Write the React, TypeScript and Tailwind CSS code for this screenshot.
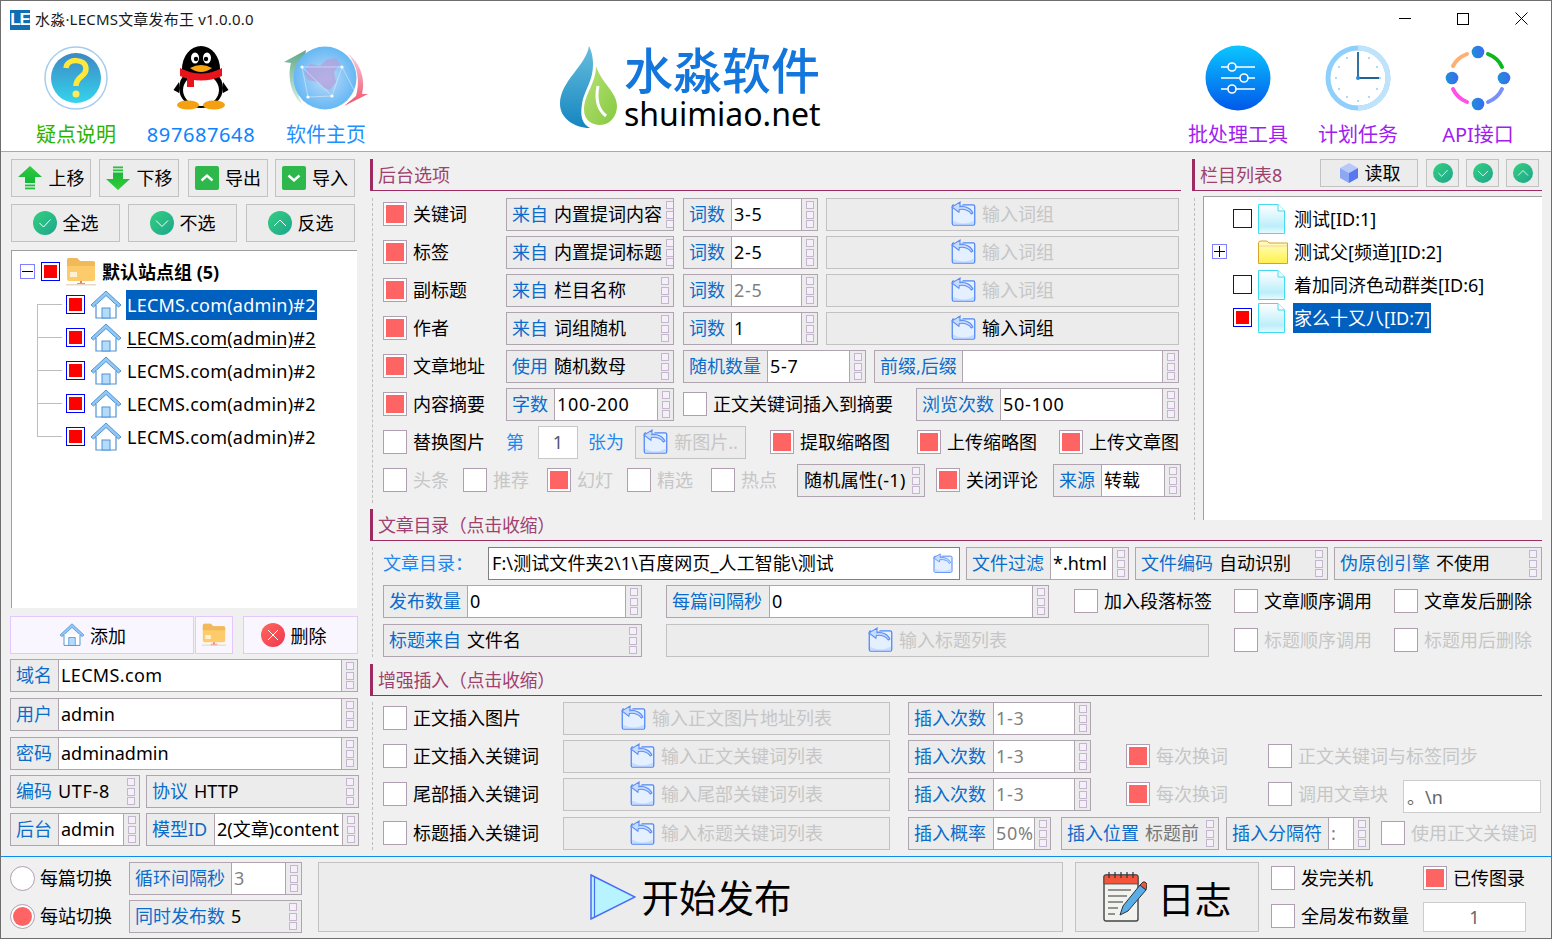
import React from 'react';

const Spin = ({ line = false }: { line?: boolean }) => (
  <div className={`w-[16px] shrink-0 self-stretch flex flex-col items-center justify-center gap-[1.5px] ml-auto ${line ? 'border-l border-[#b0a4b0]' : ''}`}>
    {[0, 1, 2].map((i) => (
      <div key={i} className="w-[8px] h-[8px] border border-[#c4b6cc] bg-[#f4eff8]" />
    ))}
  </div>
);

const wide = (v?: string) => (v && /^[\d\-%UTF]+$/.test(v) ? 'tracking-[0.7px]' : /^LECMS|\(-1\)/.test(v ?? '') ? 'tracking-[0.35px]' : '');

const Field = ({
  cls,
  label,
  value,
  labelW,
  gray,
}: {
  cls: string;
  label: string;
  value?: string;
  labelW?: string;
  gray?: boolean;
}) => (
  <div className={`h-[33px] shrink-0 flex items-center border border-[#b0a4b0] bg-[#ececec] whitespace-nowrap overflow-hidden ${cls}`}>
    {labelW ? (
      <>
        <div className={`h-full shrink-0 flex items-center pl-[5px] pb-[2px] border-r border-[#b0a4b0] text-[#0b6ccb] ${labelW}`}>{label}</div>
        <div className={`h-full flex-1 min-w-0 overflow-hidden flex items-center pl-[2px] pb-[2px] bg-white ${gray ? 'text-[#808080]' : 'text-black'} ${wide(value)}`}>{value}</div>
        <Spin line />
      </>
    ) : (
      <>
        {label && <span className="pl-[5px] pb-[2px] text-[#0b6ccb]">{label}</span>}
        <span className={`ml-[6px] pb-[2px] ${label ? '' : '-ml-[0px]'} ${gray ? 'text-[#777777]' : 'text-black'} ${wide(value)}`}>{value}</span>
        <Spin />
      </>
    )}
  </div>
);

const Check = ({ on, label, off, cls }: { on?: boolean; label: string; off?: boolean; cls: string }) => (
  <div className={`h-[33px] shrink-0 flex items-center pb-[2px] whitespace-nowrap ${cls}`}>
    <div className="w-[24px] h-[24px] shrink-0 border border-[#b09fb0] bg-white flex items-center justify-center">
      {on && <div className="w-[18px] h-[18px] bg-[#ff6464]" />}
    </div>
    <span className={`ml-[6px] ${off ? 'text-[#c6c6c6]' : 'text-black'}`}>{label}</span>
  </div>
);

const Btn = ({ cls, children }: { cls: string; children: React.ReactNode }) => (
  <div className={`shrink-0 flex items-center justify-center border border-[#c2c2c2] bg-[#ececec] whitespace-nowrap ${cls}`}>{children}</div>
);

const SecHead = ({ title, cls, children }: { title: string; cls: string; children?: React.ReactNode }) => (
  <div className={`shrink-0 flex items-start border-l-[3px] border-b border-[#9e2a62] pl-[5px] ${cls}`}>
    <span className="text-[#a0406f] self-center whitespace-nowrap">{title}</span>
    {children}
  </div>
);

const BackIcon = ({ s = 25 }: { s?: number }) => (
  <svg width={s} height={s} viewBox="0 0 24 24" className="shrink-0">
    <rect x="1.2" y="3.8" width="21.6" height="19.4" rx="1.5" fill="#e4efff" stroke="#4f86f5" strokeWidth="1.2" />
    <path d="M2 19 Q12 24 22 19 V22.5 H2Z" fill="#c6dcff" />
    <path d="M3 4 H11 V2 H3Z" fill="#f0f0f0" />
    <path d="M21 11.5 C19.5 7 13 4.5 8.5 5.5 L8.8 1 L0.8 5.8 L7.6 10.8 L8 8.2 C12 7.4 17.5 8.5 19.5 12.5 Z" fill="#c8dcff" stroke="#5b8ef5" strokeWidth="1" />
  </svg>
);

const Folder = ({ s = 30 }: { s?: number }) => (
  <svg width={s} height={s} viewBox="0 0 30 30" className="shrink-0">
    <path d="M1 3 Q1 1 3 1 H11 L14 4 H27 Q29 4 29 6 V22 Q29 24 27 24 H3 Q1 24 1 22Z" fill="#fdcb6a" />
    <path d="M1 3 Q1 1 3 1 H11 L14 4 H27 Q29 4 29 6 V9 H1Z" fill="#f0b95a" />
    <rect x="4" y="15" width="7" height="5" fill="#fff2d2" />
    <rect x="14" y="24" width="2" height="3" fill="#ec7a66" />
    <rect x="11" y="26" width="8" height="2" fill="#f0907a" />
    <rect x="0" y="27" width="30" height="1.5" fill="#e6d9c8" />
  </svg>
);

const Home = ({ s = 30 }: { s?: number }) => (
  <svg width={s} height={s} viewBox="0 0 30 30" className="shrink-0">
    <path d="M15 1 L30 15 L27.5 17 L15 5.5 L2.5 17 L0 15Z" fill="#93c8f2" stroke="#4f93d8" strokeWidth="1" />
    <path d="M5 14 V28 H25 V14" fill="#fff" stroke="#4f93d8" strokeWidth="1.2" />
    <rect x="11" y="18" width="8" height="10" fill="#b4dcf8" stroke="#4f93d8" strokeWidth="1" />
  </svg>
);

const RoundBadge = ({ kind, s = 24, id }: { kind: 'c' | 'd' | 'u'; s?: number; id: string }) => (
  <svg width={s} height={s} viewBox="0 0 24 24" className="shrink-0">
    <defs>
      <linearGradient id={id} x1="0" y1="0" x2="1" y2="1">
        <stop offset="0" stopColor="#34d07e" />
        <stop offset="1" stopColor="#1ea58e" />
      </linearGradient>
    </defs>
    <circle cx="12" cy="12" r="12" fill={`url(#${id})`} />
    <path d={kind === 'c' ? 'M6.5 12 L10.5 16 L17.5 8.5' : kind === 'd' ? 'M6 9.5 L12 15.5 L18 9.5' : 'M6 15 L12 9 L18 15'} fill="none" stroke="#fff" strokeWidth="1" />
  </svg>
);

const GreenSquare = ({ up }: { up?: boolean }) => (
  <svg width="24" height="24" viewBox="0 0 24 24" className="shrink-0">
    <rect width="24" height="24" rx="2" fill="#2eb84c" />
    <path d={up ? 'M6.5 14.5 L12 9.5 L17.5 14.5' : 'M6.5 9.5 L12 14.5 L17.5 9.5'} fill="none" stroke="#fff" strokeWidth="2.4" />
  </svg>
);

const BigArrow = ({ up, id }: { up?: boolean; id: string }) => (
  <svg width="24" height="24" viewBox="0 0 24 24" className="shrink-0">
    <defs>
      <linearGradient id={id} x1="0" y1="0" x2="0" y2="1">
        <stop offset="0" stopColor={up ? '#2ecb3c' : '#1cb53a'} />
        <stop offset="1" stopColor={up ? '#14b83a' : '#30d038'} />
      </linearGradient>
    </defs>
    {up ? (
      <g fill={`url(#${id})`}>
        <path d="M12 0 L24 11 H17 V17 H7 V11 H0Z" />
        <rect x="7" y="18.5" width="10" height="1.8" />
        <rect x="7" y="21.5" width="10" height="1.8" />
      </g>
    ) : (
      <g fill={`url(#${id})`}>
        <rect x="7" y="0.5" width="10" height="1.8" />
        <rect x="7" y="3.5" width="10" height="1.8" />
        <path d="M7 6.5 H17 V13 H24 L12 24 L0 13 H7Z" />
      </g>
    )}
  </svg>
);

const BlueBox = ({ on }: { on?: boolean }) => (
  <div className="w-[19px] h-[19px] shrink-0 border border-[#0000ff] bg-white flex items-center justify-center">
    {on && <div className="w-[13px] h-[13px] bg-[#ff0000]" />}
  </div>
);

const ExpandBox = ({ plus }: { plus?: boolean }) => (
  <div className="w-[15px] h-[15px] shrink-0 border border-[#8080ff] bg-white flex items-center justify-center relative">
    <div className="w-[11px] h-px bg-black" />
    {plus && <div className="absolute w-px h-[11px] bg-black" />}
  </div>
);

const FileIcon = ({ id }: { id: string }) => (
  <svg width="27" height="30" viewBox="0 0 27 30" className="shrink-0">
    <defs>
      <linearGradient id={id} x1="0" y1="0" x2="0" y2="1">
        <stop offset="0" stopColor="#ffffff" />
        <stop offset="0.75" stopColor="#bdeefa" />
        <stop offset="1" stopColor="#e8fbff" />
      </linearGradient>
    </defs>
    <path d="M0.5 0.5 H20 L26.5 7 V29.5 H0.5Z" fill={`url(#${id})`} stroke="#3fdcf2" />
    <path d="M20 0.5 V7 H26.5" fill="#fff" stroke="#3fdcf2" />
  </svg>
);

const YellowFolder = () => (
  <svg width="30" height="24" viewBox="0 0 30 24" className="shrink-0">
    <defs>
      <linearGradient id="yf" x1="0" y1="0" x2="0" y2="1">
        <stop offset="0" stopColor="#fffbd0" />
        <stop offset="0.6" stopColor="#fff77a" />
        <stop offset="1" stopColor="#ffef50" />
      </linearGradient>
    </defs>
    <path d="M0.5 23.5 V3 Q0.5 1 3 1 H8 Q10 1 11 3 H29.5 V23.5Z" fill="url(#yf)" stroke="#dba12c" />
    <path d="M1 6 H29" stroke="#f0d890" />
  </svg>
);

const TreeRow = ({ first, last, sel, under }: { first?: boolean; last?: boolean; sel?: boolean; under?: boolean }) => (
  <div className="h-[33px] flex items-center ml-[25px]">
    <div className="w-[25px] h-[33px] shrink-0 flex flex-col">
      <div className={`h-[16px] ${first ? '' : 'border-l border-[#bdbdbd]'}`} />
      <div className={`h-[17px] border-t border-[#bdbdbd] ${last ? '' : 'border-l'}`} />
    </div>
    <div className="ml-[4px] mr-[6px]"><BlueBox on /></div>
    <Home />
    <span className={`ml-[5px] h-[30px] px-px flex items-center whitespace-nowrap tracking-[0.22px] ${sel ? 'bg-[#0060c0] text-white' : 'text-black'} ${under ? 'underline underline-offset-2' : ''}`}>LECMS.com(admin)#2</span>
  </div>
);

const CatRow = ({ checked, folder, label, sel, id }: { checked?: boolean; folder?: boolean; label: string; sel?: boolean; id: string }) => (
  <div className="h-[33px] flex items-center pl-[8px]">
    <div className="w-[21px] shrink-0">{folder && <ExpandBox plus />}</div>
    <div className="w-[19px] shrink-0">{!folder && <BlueBox on={checked} />}</div>
    <div className="w-[34px] shrink-0 pl-[6px]">{folder ? <YellowFolder /> : <FileIcon id={id} />}</div>
    <span className={`ml-[7px] h-[30px] px-px flex items-center whitespace-nowrap ${sel ? 'bg-[#0060c0] text-white' : 'text-black'}`}>{label}</span>
  </div>
);

const Tile = ({ label, color, children, cls = '' }: { label: string; color: string; children: React.ReactNode; cls?: string }) => (
  <div className={`shrink-0 flex flex-col items-center w-[120px] ${cls}`}>
    <div className="h-[64px] flex items-center justify-center">{children}</div>
    <div className={`mt-[15px] text-[20px] leading-[20px] whitespace-nowrap ${color}`}>{label}</div>
  </div>
);

const BackBtn = ({ cls, text, off }: { cls: string; text: string; off?: boolean }) => (
  <Btn cls={`h-[33px] pb-[2px] ${cls}`}>
    <BackIcon />
    <span className={`ml-[6px] ${off ? 'text-[#c6c6c6]' : 'text-black'}`}>{text}</span>
  </Btn>
);

export default function App() {
  return (
    <div className="w-[1552px] h-[939px] overflow-hidden border border-[#6e6e6e] bg-[#f0f0f0] flex flex-col text-[18px] leading-none text-black font-['Noto_Sans','Noto_Sans_CJK_SC',sans-serif]">
      {/* header */}
      <div className="h-[151px] shrink-0 bg-white border-b border-[#a8a8a8] flex flex-col">
        <div className="h-[37px] shrink-0 flex items-center pl-[9px]">
          <div className="w-[20px] h-[20px] bg-[#106fb4] text-white text-[17px] font-bold flex items-center justify-center tracking-[-1px] font-['Liberation_Sans',sans-serif]">LE</div>
          <span className="ml-[5px] text-[15px] tracking-[0.2px] whitespace-nowrap text-[#1a1a1a]">水淼·LECMS文章发布王 v1.0.0.0</span>
          <div className="ml-auto mr-px flex items-center pb-[2px]">
            <div className="w-[58px] flex justify-center"><div className="w-[12px] h-px bg-black" /></div>
            <div className="w-[58px] flex justify-center"><div className="w-[12px] h-[12px] border border-black" /></div>
            <div className="w-[58px] flex justify-center">
              <svg width="13" height="13" viewBox="0 0 13 13"><path d="M0.5 0.5 L12.5 12.5 M12.5 0.5 L0.5 12.5" stroke="#000" strokeWidth="1" /></svg>
            </div>
          </div>
        </div>
        <div className="flex pl-[15px] pt-[8px]">
          <Tile label="疑点说明" color="text-[#2bb400]" cls="mr-[5px]">
            <svg width="64" height="64" viewBox="0 0 64 64">
              <defs>
                <linearGradient id="hq" x1="0" y1="0" x2="0" y2="1">
                  <stop offset="0" stopColor="#3c88c4" />
                  <stop offset="1" stopColor="#35d4ec" />
                </linearGradient>
              </defs>
              <circle cx="32" cy="32" r="31" fill="#fff" stroke="#a6cdf0" strokeWidth="1.5" />
              <circle cx="32" cy="32" r="25" fill="url(#hq)" />
              <path d="M22 22 C23 12 42 12 42 23 C42 31 32 30 32 40" fill="none" stroke="#ffe83c" strokeWidth="5.5" />
              <circle cx="32" cy="48" r="3.5" fill="#ffeb60" />
            </svg>
          </Tile>
          <Tile label="897687648" color="text-[#0a84ff] tracking-[0.6px]" cls="mr-[5px]">
            <svg width="56" height="64" viewBox="0 0 56 64">
              <ellipse cx="28" cy="23" rx="19" ry="23" fill="#000" />
              <ellipse cx="28" cy="42" rx="22" ry="20" fill="#000" />
              <path d="M6 36 L0.5 44 L6 47Z M50 36 L55.5 44 L50 47Z" fill="#000" />
              <ellipse cx="28" cy="44" rx="18" ry="16" fill="#fff" />
              <ellipse cx="22" cy="12" rx="4" ry="5.5" fill="#fff" />
              <ellipse cx="34" cy="12" rx="4" ry="5.5" fill="#fff" />
              <circle cx="23" cy="13" r="2.2" fill="#000" />
              <circle cx="33" cy="13" r="2.2" fill="#000" />
              <path d="M17 22 Q28 16 39 22 Q28 30 17 22Z" fill="#f8a510" />
              <path d="M7 22 Q28 33 49 22 L49 30 Q28 39 7 30Z" fill="#e8141c" />
              <rect x="14" y="30" width="7" height="11" fill="#e8141c" />
              <ellipse cx="15" cy="59" rx="11" ry="4.5" fill="#f5a010" />
              <ellipse cx="41" cy="59" rx="11" ry="4.5" fill="#f5a010" />
            </svg>
          </Tile>
          <Tile label="软件主页" color="text-[#1e90ff]" cls="mr-[174px]">
            <svg width="84" height="64" viewBox="0 0 84 64">
              <defs>
                <radialGradient id="gl" cx="0.5" cy="0.5" r="0.55">
                  <stop offset="0" stopColor="#c0dcf8" />
                  <stop offset="1" stopColor="#5cb4f4" />
                </radialGradient>
                <linearGradient id="gg" x1="0" y1="0" x2="0" y2="1">
                  <stop offset="0" stopColor="#5fa888" />
                  <stop offset="1" stopColor="#d8f0e8" />
                </linearGradient>
                <linearGradient id="gr" x1="0" y1="0" x2="0" y2="1">
                  <stop offset="0" stopColor="#f8d0e0" />
                  <stop offset="1" stopColor="#f05068" />
                </linearGradient>
              </defs>
              <path d="M22 4 L0 16 L7 17 C3 32 8 50 18 58 C11 44 10 28 15 18 L20 18Z" fill="url(#gg)" />
              <path d="M64 8 C74 20 76 36 72 50 L60 60 L84 48 L78 48 C82 34 76 16 64 8Z" fill="url(#gr)" />
              <circle cx="41" cy="32" r="31.5" fill="url(#gl)" />
              <path d="M20 26 L26 18 L36 20 L42 14 L52 12 L56 18 L50 26 L52 36 L46 44 L40 42 L34 36 L24 34Z" fill="#b4a0dc" opacity="0.75" />
              <path d="M18 21 L58 21 M18 21 L24 51 M18 21 L48 50 M58 21 L48 50 M24 51 L48 50 M58 21 L70 44" stroke="#d8ecfc" strokeWidth="0.6" fill="none" />
              <g fill="#fff"><circle cx="18" cy="21" r="1.6" /><circle cx="58" cy="21" r="1.6" /><circle cx="24" cy="51" r="1.6" /><circle cx="48" cy="50" r="1.6" /></g>
            </svg>
          </Tile>
          <div className="w-[261px] shrink-0 flex items-start h-[84px]">
            <svg width="58" height="83" viewBox="0 0 58 83" className="shrink-0">
              <defs>
                <linearGradient id="d1" x1="0" y1="0" x2="0" y2="1">
                  <stop offset="0" stopColor="#67bedd" />
                  <stop offset="1" stopColor="#1585c0" />
                </linearGradient>
                <linearGradient id="d2" x1="0" y1="0" x2="1" y2="1">
                  <stop offset="0" stopColor="#b8e276" />
                  <stop offset="1" stopColor="#85c940" />
                </linearGradient>
              </defs>
              <path d="M29 0 C26 20 0 35 0 58 C0 72 14 82 30 82 C22 78 20 70 22 58 C24 44 33 36 33 18 C33 10 31 4 29 0Z" fill="url(#d1)" />
              <path d="M36 20 C36 38 24 48 24 64 C24 74 32 79 40 79 C50 79 57 70 57 60 C57 46 42 38 36 20Z" fill="url(#d2)" />
              <path d="M38 40 C36 50 36 62 46 70" fill="none" stroke="#fff" strokeWidth="3" />
            </svg>
            <div className="ml-[6px] flex flex-col">
              <span className="text-[49px] leading-[49px] text-[#1376dc] whitespace-nowrap font-medium">水淼软件</span>
              <span className="mt-[4px] text-[32px] leading-[30px] text-black whitespace-nowrap">shuimiao.net</span>
            </div>
          </div>
          <div className="ml-auto mr-[13px] flex">
            <Tile label="批处理工具" color="text-[#a01ef0]">
              <svg width="66" height="66" viewBox="0 0 66 66">
                <defs>
                  <linearGradient id="sl" x1="0" y1="0" x2="0" y2="1">
                    <stop offset="0" stopColor="#0cc6ff" />
                    <stop offset="1" stopColor="#0058ea" />
                  </linearGradient>
                </defs>
                <circle cx="33" cy="33" r="32.5" fill="url(#sl)" />
                <g stroke="#fff" strokeWidth="1.6" fill="none">
                  <path d="M16 22 H50 M16 33 H50 M16 44 H50" />
                  <circle cx="27" cy="22" r="4" fill="#0a9cf4" />
                  <circle cx="39" cy="33" r="4" fill="#0a88f0" />
                  <circle cx="27" cy="44" r="4" fill="#0a70ec" />
                </g>
              </svg>
            </Tile>
            <Tile label="计划任务" color="text-[#a01ef0]">
              <svg width="66" height="66" viewBox="0 0 66 66">
                <circle cx="33" cy="33" r="30" fill="#fff" stroke="#8ed0fb" strokeWidth="5" />
                <path d="M33 3 A30 30 0 0 1 33 63" fill="none" stroke="#bfe3fb" strokeWidth="5" />
                <g fill="#8cc8ee">
                  <circle cx="33" cy="11" r="0.9" /><circle cx="33" cy="56" r="0.9" /><circle cx="11" cy="33" r="0.9" /><circle cx="55" cy="33" r="0.9" />
                  <circle cx="44" cy="13" r="0.9" /><circle cx="22" cy="13" r="0.9" /><circle cx="52" cy="22" r="0.9" /><circle cx="14" cy="22" r="0.9" />
                  <circle cx="52" cy="44" r="0.9" /><circle cx="14" cy="44" r="0.9" /><circle cx="44" cy="52" r="0.9" /><circle cx="22" cy="52" r="0.9" />
                </g>
                <path d="M33 7 V33 H54" fill="none" stroke="#1e6296" strokeWidth="1.8" />
                <circle cx="33" cy="33" r="2" fill="#2a8ad8" />
              </svg>
            </Tile>
            <Tile label="API接口" color="text-[#a01ef0]">
              <svg width="66" height="66" viewBox="0 0 66 66">
                <defs>
                  <linearGradient id="an" x1="0" y1="0" x2="1" y2="0">
                    <stop offset="0" stopColor="#1e90d8" />
                    <stop offset="1" stopColor="#3a6cf0" />
                  </linearGradient>
                </defs>
                <g fill="none" strokeWidth="4" strokeLinecap="round">
                  <path d="M8 21 Q12 13 22 9" stroke="#ffb070" />
                  <path d="M43 9 Q53 13 57 22" stroke="#0cb81c" />
                  <path d="M57 44 Q53 53 43 57" stroke="#7a90f8" />
                  <path d="M22 57 Q12 53 8 44" stroke="#ff50e8" />
                </g>
                <g fill="url(#an)">
                  <circle cx="33" cy="7" r="6.3" /><circle cx="33" cy="59" r="6.3" /><circle cx="7" cy="33" r="6.3" /><circle cx="59" cy="33" r="6.3" />
                </g>
              </svg>
            </Tile>
          </div>
        </div>
      </div>

      {/* body */}
      <div className="h-[704px] shrink-0 flex">
        {/* left column */}
        <div className="w-[369px] shrink-0 pl-[9px] pt-[7px] flex flex-col">
          <div className="flex h-[38px] shrink-0 pl-px">
            <Btn cls="w-[80px] h-[38px]"><BigArrow up id="au" /><span className="ml-[7px]">上移</span></Btn>
            <Btn cls="w-[80px] h-[38px] ml-[8px]"><BigArrow id="ad" /><span className="ml-[7px]">下移</span></Btn>
            <Btn cls="w-[80px] h-[38px] ml-[9px]"><GreenSquare up /><span className="ml-[6px]">导出</span></Btn>
            <Btn cls="w-[80px] h-[38px] ml-[7px]"><GreenSquare /><span className="ml-[6px]">导入</span></Btn>
          </div>
          <div className="flex h-[38px] shrink-0 mt-[7px] pl-px">
            <Btn cls="w-[109px] h-[38px]"><RoundBadge kind="c" id="b1" /><span className="ml-[6px]">全选</span></Btn>
            <Btn cls="w-[109px] h-[38px] ml-[8px]"><RoundBadge kind="d" id="b2" /><span className="ml-[6px]">不选</span></Btn>
            <Btn cls="w-[109px] h-[38px] ml-[9px]"><RoundBadge kind="u" id="b3" /><span className="ml-[6px]">反选</span></Btn>
          </div>
          <div className="ml-px mt-[8px] w-[346px] h-[358px] shrink-0 bg-white border-t border-l border-[#a0a0a0] pt-[4px]">
            <div className="h-[33px] flex items-center pl-[8px]">
              <ExpandBox />
              <div className="ml-[6px] mr-[6px]"><BlueBox on /></div>
              <Folder />
              <span className="ml-[6px] font-bold whitespace-nowrap">默认站点组 (5)</span>
            </div>
            <TreeRow first sel />
            <TreeRow under />
            <TreeRow />
            <TreeRow />
            <TreeRow last />
          </div>
          <div className="flex h-[38px] shrink-0 mt-[8px]">
            <div className="w-[184px] h-[38px] border-[1.5px] border-[#e2c8ff] bg-[#faf6ff] flex items-center justify-center pr-[18px]">
              <Home s={24} /><span className="ml-[6px] mt-[1px]">添加</span>
            </div>
            <div className="w-[38px] h-[38px] ml-px border-[1.5px] border-[#e2c8ff] bg-[#faf6ff] flex items-center justify-center"><Folder s={24} /></div>
            <div className="w-[115px] h-[38px] ml-[10px] border-[1.5px] border-[#e2c8ff] bg-[#faf6ff] flex items-center justify-center pr-[14px]">
              <svg width="24" height="24" viewBox="0 0 24 24" className="shrink-0">
                <defs>
                  <linearGradient id="xr" x1="0" y1="0" x2="1" y2="1">
                    <stop offset="0" stopColor="#ff6a5e" />
                    <stop offset="1" stopColor="#f0354e" />
                  </linearGradient>
                </defs>
                <circle cx="12" cy="12" r="12" fill="url(#xr)" />
                <path d="M7 7 L17 17 M17 7 L7 17" stroke="#fff" strokeWidth="1" />
              </svg>
              <span className="ml-[6px] mt-[1px]">删除</span>
            </div>
          </div>
          <Field cls="w-[348px] mt-[5px]" label="域名" value="LECMS.com" labelW="w-[48px]" />
          <Field cls="w-[348px] mt-[6px]" label="用户" value="admin" labelW="w-[48px]" />
          <Field cls="w-[348px] mt-[6px]" label="密码" value="adminadmin" labelW="w-[48px]" />
          <div className="flex mt-[5px]">
            <Field cls="w-[130px]" label="编码" value="UTF-8" />
            <Field cls="w-[213px] ml-[6px]" label="协议" value="HTTP" />
          </div>
          <div className="flex mt-[5px]">
            <Field cls="w-[130px]" label="后台" value="admin" labelW="w-[48px]" />
            <Field cls="w-[213px] ml-[6px]" label="模型ID" value="2(文章)content" labelW="w-[68px]" />
          </div>
        </div>

        {/* right region */}
        <div className="flex-1 min-w-0 pt-[7px] flex flex-col">
          <div className="flex h-[350px] shrink-0">
            {/* 后台选项 */}
            <div className="w-[811px] shrink-0 flex flex-col">
              <SecHead title="后台选项" cls="h-[32px]" />
              <div className="ml-[2px] mt-[7px] h-[305px] shrink-0 border-l border-dashed border-[#bdbdbd] pl-[10px] flex flex-col gap-[5px]">
                {[
                  ['关键词', '来自', '内置提词内容', '3-5', false, false],
                  ['标签', '来自', '内置提词标题', '2-5', false, false],
                  ['副标题', '来自', '栏目名称', '2-5', true, true],
                  ['作者', '来自', '词组随机', '1', false, false],
                ].map(([a, b, c, d, g]) => (
                  <div key={a as string} className="flex h-[33px] shrink-0">
                    <Check on label={a as string} cls="w-[123px]" />
                    <Field cls="w-[168px]" label={b as string} value={c as string} />
                    <Field cls="w-[135px] ml-[9px]" label="词数" value={d as string} labelW="w-[48px]" gray={g as boolean} />
                    <BackBtn cls="w-[353px] ml-[8px]" text="输入词组" off={a !== '作者'} />
                  </div>
                ))}
                <div className="flex h-[33px] shrink-0">
                  <Check on label="文章地址" cls="w-[123px]" />
                  <Field cls="w-[168px]" label="使用" value="随机数母" />
                  <Field cls="w-[183px] ml-[9px]" label="随机数量" value="5-7" labelW="w-[84px]" />
                  <Field cls="w-[305px] ml-[8px]" label="前缀,后缀" value="" labelW="w-[88px]" />
                </div>
                <div className="flex h-[33px] shrink-0">
                  <Check on label="内容摘要" cls="w-[123px]" />
                  <Field cls="w-[168px]" label="字数" value="100-200" labelW="w-[48px]" />
                  <Check label="正文关键词插入到摘要" cls="w-[233px] ml-[9px]" />
                  <Field cls="w-[263px]" label="浏览次数" value="50-100" labelW="w-[84px]" />
                </div>
                <div className="flex h-[33px] shrink-0 items-center">
                  <Check label="替换图片" cls="w-[123px]" />
                  <span className="w-[32px] pb-[2px] text-[#1e88f0]">第</span>
                  <div className="w-[40px] h-[33px] shrink-0 border border-[#c8c8c8] bg-white flex items-center justify-center pb-[2px] text-[#555577]">1</div>
                  <span className="w-[36px] ml-[10px] pb-[2px] text-[#1e88f0] whitespace-nowrap">张为</span>
                  <BackBtn cls="w-[111px] ml-[11px]" text="新图片.." off />
                  <Check on label="提取缩略图" cls="w-[147px] ml-[24px]" />
                  <Check on label="上传缩略图" cls="w-[142px]" />
                  <Check on label="上传文章图" cls="w-[120px]" />
                </div>
                <div className="flex h-[33px] shrink-0">
                  <Check off label="头条" cls="w-[80px]" />
                  <Check off label="推荐" cls="w-[84px]" />
                  <Check on off label="幻灯" cls="w-[80px]" />
                  <Check off label="精选" cls="w-[84px]" />
                  <Check off label="热点" cls="w-[86px]" />
                  <Field cls="w-[128px]" label="" value="随机属性(-1)" />
                  <Check on label="关闭评论" cls="w-[117px] ml-[11px]" />
                  <Field cls="w-[128px]" label="来源" value="转载" labelW="w-[48px]" />
                </div>
              </div>
            </div>
            {/* 栏目列表 */}
            <div className="w-[350px] ml-[11px] shrink-0 flex flex-col">
              <SecHead title="栏目列表8" cls="h-[32px]">
                <Btn cls="w-[98px] h-[28px] ml-auto">
                  <svg width="22" height="22" viewBox="0 0 22 22" className="shrink-0">
                    <path d="M11 1 L20 6 L11 11 L2 6Z" fill="#b8c8f8" />
                    <path d="M2 6 L11 11 V21 L2 16Z" fill="#8ca8f4" />
                    <path d="M20 6 L11 11 V21 L20 16Z" fill="#5878f0" />
                  </svg>
                  <span className="ml-[5px]">读取</span>
                </Btn>
                <Btn cls="w-[33px] h-[28px] ml-[8px]"><RoundBadge kind="c" s={20} id="b4" /></Btn>
                <Btn cls="w-[33px] h-[28px] ml-[7px]"><RoundBadge kind="d" s={20} id="b5" /></Btn>
                <Btn cls="w-[33px] h-[28px] ml-[7px] mr-[3px]"><RoundBadge kind="u" s={20} id="b6" /></Btn>
              </SecHead>
              <div className="flex mt-[5px] h-[324px] shrink-0">
                <div className="ml-[2px] mt-[2px] border-l border-dashed border-[#bdbdbd]" />
                <div className="ml-[8px] flex-1 bg-white border-t border-l border-[#a0a0a0] pt-[5px]">
                  <CatRow id="f1" label="测试[ID:1]" />
                  <CatRow id="f2" folder label="测试父[频道][ID:2]" />
                  <CatRow id="f3" label="着加同济色动群类[ID:6]" />
                  <CatRow id="f4" checked sel label="家么十又八[ID:7]" />
                </div>
              </div>
            </div>
          </div>

          {/* 文章目录 */}
          <SecHead title="文章目录（点击收缩）" cls="h-[32px] w-[1172px] tracking-[-0.3px]" />
          <div className="ml-[2px] mt-[6px] border-l border-dashed border-[#bdbdbd] pl-[10px] flex flex-col">
            <div className="flex h-[33px] items-center">
              <span className="w-[105px] pb-[2px] text-[#1e88f0] whitespace-nowrap">文章目录：</span>
              <div className="w-[472px] h-[33px] shrink-0 border border-[#808080] bg-white flex items-center pl-[3px] pr-[6px] pb-[2px] whitespace-nowrap">
                <span className="tracking-[0.1px]">F:\测试文件夹2\1\百度网页_人工智能\测试</span>
                <div className="ml-auto"><BackIcon s={20} /></div>
              </div>
              <Field cls="w-[163px] ml-[6px]" label="文件过滤" value="*.html" labelW="w-[84px]" />
              <Field cls="w-[193px] ml-[6px]" label="文件编码" value="自动识别" />
              <Field cls="w-[208px] ml-[6px]" label="伪原创引擎" value="不使用" />
            </div>
            <div className="flex h-[33px] mt-[5px]">
              <Field cls="w-[259px]" label="发布数量" value="0" labelW="w-[84px]" />
              <Field cls="w-[383px] ml-[24px]" label="每篇间隔秒" value="0" labelW="w-[103px]" />
              <Check label="加入段落标签" cls="w-[160px] ml-[25px]" />
              <Check label="文章顺序调用" cls="w-[160px]" />
              <Check label="文章发后删除" cls="w-[148px]" />
            </div>
            <div className="flex h-[33px] mt-[6px]">
              <Field cls="w-[259px]" label="标题来自" value="文件名" />
              <BackBtn cls="w-[543px] ml-[24px]" text="输入标题列表" off />
              <Check off label="标题顺序调用" cls="w-[160px] ml-[25px]" />
              <Check off label="标题用后删除" cls="w-[148px]" />
            </div>
          </div>

          {/* 增强插入 */}
          <SecHead title="增强插入（点击收缩）" cls="h-[32px] w-[1172px] mt-[7px] tracking-[-0.3px]" />
          <div className="ml-[2px] mt-[6px] h-[148px] border-l border-dashed border-[#bdbdbd] pl-[10px] flex flex-col">
            <div className="flex h-[33px]">
              <Check label="正文插入图片" cls="w-[180px]" />
              <BackBtn cls="w-[327px]" text="输入正文图片地址列表" off />
              <Field cls="w-[183px] ml-[18px]" label="插入次数" value="1-3" labelW="w-[85px]" gray />
            </div>
            <div className="flex h-[33px] mt-[5px]">
              <Check label="正文插入关键词" cls="w-[180px]" />
              <BackBtn cls="w-[327px]" text="输入正文关键词列表" off />
              <Field cls="w-[183px] ml-[18px]" label="插入次数" value="1-3" labelW="w-[85px]" gray />
              <Check on off label="每次换词" cls="w-[142px] ml-[35px]" />
              <Check off label="正文关键词与标签同步" cls="w-[260px]" />
            </div>
            <div className="flex h-[33px] mt-[5px]">
              <Check label="尾部插入关键词" cls="w-[180px]" />
              <BackBtn cls="w-[327px]" text="输入尾部关键词列表" off />
              <Field cls="w-[183px] ml-[18px]" label="插入次数" value="1-3" labelW="w-[85px]" gray />
              <Check on off label="每次换词" cls="w-[142px] ml-[35px]" />
              <Check off label="调用文章块" cls="w-[135px]" />
              <div className="w-[138px] h-[33px] mt-[2px] shrink-0 border border-[#cccccc] bg-white flex items-center pl-[3px] text-[#666666]">。\n</div>
            </div>
            <div className="flex h-[33px] mt-[6px]">
              <Check label="标题插入关键词" cls="w-[180px]" />
              <BackBtn cls="w-[327px]" text="输入标题关键词列表" off />
              <Field cls="w-[143px] ml-[18px]" label="插入概率" value="50%" labelW="w-[85px]" gray />
              <Field cls="w-[158px] ml-[10px]" label="插入位置" value="标题前" gray />
              <Field cls="w-[144px] ml-[7px]" label="插入分隔符" value=":" labelW="w-[102px]" gray />
              <Check off label="使用正文关键词" cls="w-[160px] ml-[11px]" />
            </div>
          </div>
        </div>
      </div>

      {/* bottom */}
      <div className="flex-1 min-h-0 border-t border-[#0a8cf0] flex pl-[9px] pt-[5px]">
        <div className="w-[119px] shrink-0 flex flex-col gap-[5px]">
          <div className="h-[33px] flex items-center pb-[1px] whitespace-nowrap">
            <div className="w-[25px] h-[25px] rounded-full border border-[#b09fb0] bg-white shrink-0" />
            <span className="ml-[5px]">每篇切换</span>
          </div>
          <div className="h-[33px] flex items-center pb-[1px] whitespace-nowrap">
            <div className="w-[25px] h-[25px] rounded-full border border-[#b09fb0] bg-white shrink-0 flex items-center justify-center"><div className="w-[19px] h-[19px] rounded-full bg-[#ff6464]" /></div>
            <span className="ml-[5px]">每站切换</span>
          </div>
        </div>
        <div className="w-[173px] shrink-0 flex flex-col gap-[5px]">
          <Field cls="w-[173px]" label="循环间隔秒" value="3" labelW="w-[102px]" gray />
          <Field cls="w-[173px]" label="同时发布数" value="5" />
        </div>
        <Btn cls="w-[745px] h-[70px] ml-[16px]">
          <svg width="46" height="46" viewBox="0 0 46 46" className="shrink-0">
            <path d="M1 1 L45 23 L1 45Z" fill="#b8f4ff" stroke="#4a6cf4" strokeWidth="1.5" />
            <path d="M4.5 3 V43" stroke="#4a6cf4" strokeWidth="1.2" />
          </svg>
          <span className="ml-[6px] mt-[1px] text-[37.5px] leading-none">开始发布</span>
        </Btn>
        <Btn cls="w-[184px] h-[70px] ml-[12px]">
          <svg width="44" height="50" viewBox="0 0 44 50" className="shrink-0">
            <rect x="1" y="3" width="34" height="46" rx="2" fill="#f2f2ee" stroke="#444" strokeWidth="1.4" />
            <path d="M1 12 V5 Q1 3 3 3 H33 Q35 3 35 5 V12Z" fill="#f4553a" stroke="#444" strokeWidth="0.8" />
            <path d="M6 0 V6 M12 0 V6 M18 0 V6 M24 0 V6 M30 0 V6" stroke="#333" strokeWidth="1.2" />
            <path d="M5 18 H28 M5 24 H24 M5 30 H20 M5 36 H15 M5 42 H12" stroke="#333" strokeWidth="1.2" />
            <path d="M37 13 L43 18 L25 39 L17 43 L20 34Z" fill="#5aaee8" stroke="#333" strokeWidth="1" />
            <path d="M37 13 L40 10 Q42 9 44 12 L43 18Z" fill="#f4553a" stroke="#333" strokeWidth="1" />
          </svg>
          <span className="ml-[11px] mt-[4px] text-[37px] leading-none">日志</span>
        </Btn>
        <div className="ml-[12px] flex flex-col gap-[5px]">
          <div className="flex h-[33px]">
            <Check label="发完关机" cls="w-[152px]" />
            <Check on label="已传图录" cls="w-[120px]" />
          </div>
          <div className="flex h-[33px] items-center">
            <Check label="全局发布数量" cls="w-[152px]" />
            <div className="w-[103px] h-[30px] shrink-0 border border-[#cccccc] bg-white flex items-center justify-center text-[#666666]">1</div>
          </div>
        </div>
      </div>
    </div>
  );
}
